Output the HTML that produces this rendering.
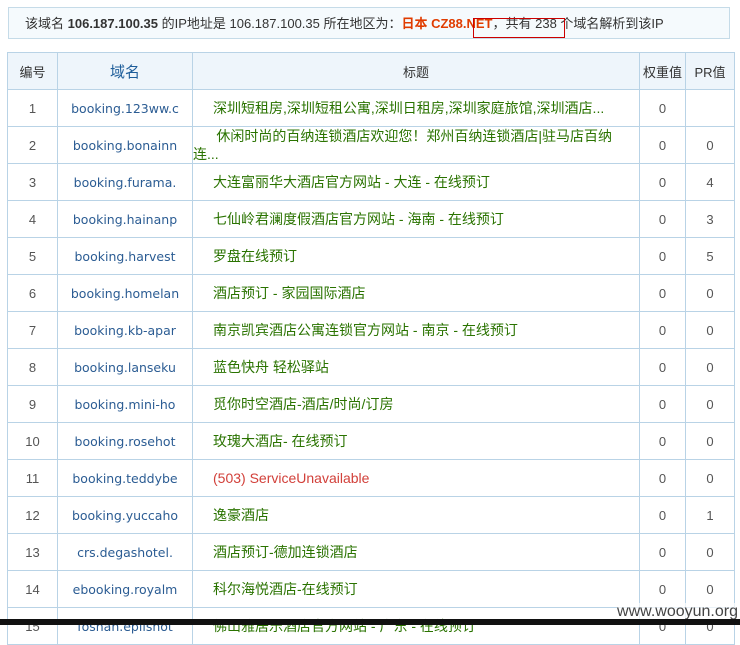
<!DOCTYPE html><html><head><meta charset="utf-8"><style>
body{margin:0;background:#fff;width:740px;height:625px;overflow:hidden;position:relative;font-family:"DejaVu Sans","Noto Sans CJK SC",sans-serif;font-size:12px;color:#333}
.info{position:absolute;left:8px;top:7px;width:722px;height:32px;border:1px solid #c5dbe8;background:#f5fafd;line-height:31px;box-sizing:border-box;padding-left:16px;font-size:12px;font-family:"Liberation Sans","Noto Sans CJK SC",sans-serif;font-size:13px}
.info b{color:#333}.red{color:#e03c00;font-weight:bold}
.box{position:absolute;left:473px;top:18px;width:90px;height:18px;border:1px solid #c00}
table{position:absolute;left:7px;top:52px;border-collapse:collapse;width:727px;table-layout:fixed}
td,th{border:1px solid #b9d3e6;height:36px;padding:0;text-align:center;font-weight:normal;white-space:nowrap;overflow:hidden}
th{background:#eef5fb;height:36px;font-family:"Liberation Sans","Noto Sans CJK SC",sans-serif;font-size:13px}
th.d{color:#1d5d9a;font-size:15px}
td.d{color:#2b5c93;font-size:12.5px}
td.t{text-align:left;padding-left:20px;color:#2a7300;font-size:14px;font-family:"Liberation Sans","Noto Sans CJK SC",sans-serif}
td.t div{height:36px;line-height:36px;overflow:hidden}
td.t div.w{white-space:normal;line-height:18px;padding-right:10px}
td.n,td.v{color:#555;font-size:13px;font-family:"Liberation Sans",sans-serif}
.bar{position:absolute;left:0;top:619px;width:740px;height:6px;background:#111}
.wm{position:absolute;right:2px;top:603px;font-size:16px;color:#444;font-family:"Liberation Sans",sans-serif;background:rgba(255,255,255,.7)}
</style></head><body>
<div class="info">该域名 <b>106.187.100.35</b> 的IP地址是 106.187.100.35 所在地区为：<span class="red">日本 CZ88.NET</span>，共有 238 个域名解析到该IP</div>
<div class="box"></div>
<table>
<colgroup><col style="width:50px"><col style="width:135px"><col style="width:447px"><col style="width:46px"><col style="width:49px"></colgroup>
<tr><th>编号</th><th class="d">域名</th><th>标题</th><th>权重值</th><th>PR值</th></tr>
<tr><td class="n">1</td><td class="d">booking.123ww.c</td><td class="t"><div>深圳短租房,深圳短租公寓,深圳日租房,深圳家庭旅馆,深圳酒店...</div></td><td class="v">0</td><td class="v"></td></tr>
<tr><td class="n">2</td><td class="d">booking.bonainn</td><td class="t" style="padding-left:0"><div class="w">&nbsp;&nbsp;&nbsp;&nbsp;&nbsp;&nbsp;休闲时尚的百纳连锁酒店欢迎您！郑州百纳连锁酒店|驻马店百纳连...</div></td><td class="v">0</td><td class="v">0</td></tr>
<tr><td class="n">3</td><td class="d">booking.furama.</td><td class="t"><div>大连富丽华大酒店官方网站 - 大连 - 在线预订</div></td><td class="v">0</td><td class="v">4</td></tr>
<tr><td class="n">4</td><td class="d">booking.hainanp</td><td class="t"><div>七仙岭君澜度假酒店官方网站 - 海南 - 在线预订</div></td><td class="v">0</td><td class="v">3</td></tr>
<tr><td class="n">5</td><td class="d">booking.harvest</td><td class="t"><div>罗盘在线预订</div></td><td class="v">0</td><td class="v">5</td></tr>
<tr><td class="n">6</td><td class="d">booking.homelan</td><td class="t"><div>酒店预订 - 家园国际酒店</div></td><td class="v">0</td><td class="v">0</td></tr>
<tr><td class="n">7</td><td class="d">booking.kb-apar</td><td class="t"><div>南京凯宾酒店公寓连锁官方网站 - 南京 - 在线预订</div></td><td class="v">0</td><td class="v">0</td></tr>
<tr><td class="n">8</td><td class="d">booking.lanseku</td><td class="t"><div>蓝色快舟 轻松驿站</div></td><td class="v">0</td><td class="v">0</td></tr>
<tr><td class="n">9</td><td class="d">booking.mini-ho</td><td class="t"><div>觅你时空酒店-酒店/时尚/订房</div></td><td class="v">0</td><td class="v">0</td></tr>
<tr><td class="n">10</td><td class="d">booking.rosehot</td><td class="t"><div>玫瑰大酒店- 在线预订</div></td><td class="v">0</td><td class="v">0</td></tr>
<tr><td class="n">11</td><td class="d">booking.teddybe</td><td class="t" style="color:#d2403a"><div>(503) ServiceUnavailable</div></td><td class="v">0</td><td class="v">0</td></tr>
<tr><td class="n">12</td><td class="d">booking.yuccaho</td><td class="t"><div>逸豪酒店</div></td><td class="v">0</td><td class="v">1</td></tr>
<tr><td class="n">13</td><td class="d">crs.degashotel.</td><td class="t"><div>酒店预订-德加连锁酒店</div></td><td class="v">0</td><td class="v">0</td></tr>
<tr><td class="n">14</td><td class="d">ebooking.royalm</td><td class="t"><div>科尔海悦酒店-在线预订</div></td><td class="v">0</td><td class="v">0</td></tr>
<tr><td class="n">15</td><td class="d">foshan.epilshot</td><td class="t"><div>佛山雅居乐酒店官方网站 - 广东 - 在线预订</div></td><td class="v">0</td><td class="v">0</td></tr>
</table>
<div class="wm">www.wooyun.org</div>
<div class="bar"></div>
</body></html>
